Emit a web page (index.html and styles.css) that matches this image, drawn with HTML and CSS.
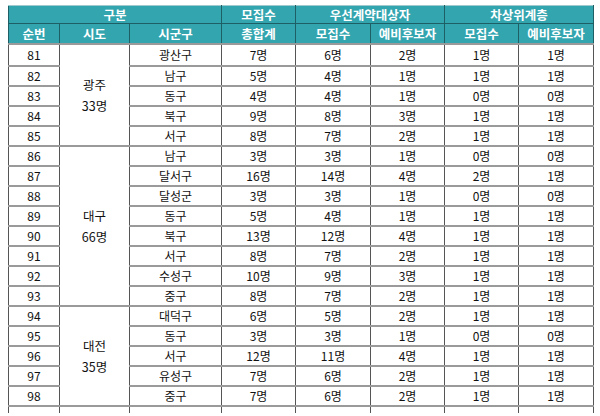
FILE: index.html
```html
<!DOCTYPE html>
<html lang="ko">
<head>
<meta charset="utf-8">
<link rel="stylesheet" href="styles.css">
</head>
<body>
<table class="grid">
<colgroup>
<col class="c1"><col class="c2"><col class="c3"><col class="c4"><col class="c5"><col class="c6"><col class="c7"><col class="c8">
</colgroup>
<thead>
<tr class="h1"><th colspan="3">구분</th><th>모집수</th><th colspan="2">우선계약대상자</th><th colspan="2">차상위계층</th></tr>
<tr class="h2"><th>순번</th><th>시도</th><th>시군구</th><th>총합계</th><th>모집수</th><th>예비후보자</th><th>모집수</th><th>예비후보자</th></tr>
</thead>
<tbody>
<tr class="first"><td>81</td><td rowspan="5" class="region">광주<br>33명</td><td>광산구</td><td>7명</td><td>6명</td><td>2명</td><td>1명</td><td>1명</td></tr>
<tr><td>82</td><td>남구</td><td>5명</td><td>4명</td><td>1명</td><td>1명</td><td>1명</td></tr>
<tr><td>83</td><td>동구</td><td>4명</td><td>4명</td><td>1명</td><td>0명</td><td>0명</td></tr>
<tr><td>84</td><td>북구</td><td>9명</td><td>8명</td><td>3명</td><td>1명</td><td>1명</td></tr>
<tr><td>85</td><td>서구</td><td>8명</td><td>7명</td><td>2명</td><td>1명</td><td>1명</td></tr>
<tr><td>86</td><td rowspan="8" class="region">대구<br>66명</td><td>남구</td><td>3명</td><td>3명</td><td>1명</td><td>0명</td><td>0명</td></tr>
<tr><td>87</td><td>달서구</td><td>16명</td><td>14명</td><td>4명</td><td>2명</td><td>1명</td></tr>
<tr><td>88</td><td>달성군</td><td>3명</td><td>3명</td><td>1명</td><td>0명</td><td>0명</td></tr>
<tr><td>89</td><td>동구</td><td>5명</td><td>4명</td><td>1명</td><td>1명</td><td>1명</td></tr>
<tr><td>90</td><td>북구</td><td>13명</td><td>12명</td><td>4명</td><td>1명</td><td>1명</td></tr>
<tr><td>91</td><td>서구</td><td>8명</td><td>7명</td><td>2명</td><td>1명</td><td>1명</td></tr>
<tr><td>92</td><td>수성구</td><td>10명</td><td>9명</td><td>3명</td><td>1명</td><td>1명</td></tr>
<tr><td>93</td><td>중구</td><td>8명</td><td>7명</td><td>2명</td><td>1명</td><td>1명</td></tr>
<tr><td>94</td><td rowspan="5" class="region">대전<br>35명</td><td>대덕구</td><td>6명</td><td>5명</td><td>2명</td><td>1명</td><td>1명</td></tr>
<tr><td>95</td><td>동구</td><td>3명</td><td>3명</td><td>1명</td><td>0명</td><td>0명</td></tr>
<tr><td>96</td><td>서구</td><td>12명</td><td>11명</td><td>4명</td><td>1명</td><td>1명</td></tr>
<tr><td>97</td><td>유성구</td><td>7명</td><td>6명</td><td>2명</td><td>1명</td><td>1명</td></tr>
<tr><td>98</td><td>중구</td><td>7명</td><td>6명</td><td>2명</td><td>1명</td><td>1명</td></tr>
<tr class="tail"><td></td><td></td><td></td><td></td><td></td><td></td><td></td><td></td></tr>
</tbody>
</table>
</body>
</html>
```

FILE: styles.css
```css
html, body {
  margin: 0;
  padding: 0;
  background: #ffffff;
}
body {
  padding: 5px 0 0 8px;
  font-family: "Noto Sans CJK KR", "Noto Sans", sans-serif;
  color: #111;
}
.grid {
  border-collapse: collapse;
  table-layout: fixed;
  width: 585px;
  font-size: 12px;
}
.c1 { width: 51px; }
.c2 { width: 70px; }
.c3 { width: 92px; }
.c4 { width: 74px; }
.c5 { width: 75px; }
.c6 { width: 74px; }
.c7 { width: 74px; }
.c8 { width: 75px; }
.grid th {
  background: #33a5af;
  color: #ffffff;
  font-weight: 700;
  font-size: 12.5px;
  padding: 0;
  line-height: 16px;
  border: 1px solid #1d5f64;
  text-align: center;
}
.grid .h1 th {
  height: 17px;
  border-top: 1px solid #9fc9cc;
}
.grid .h2 th {
  height: 19px;
}
.grid td {
  padding: 0;
  height: 18px;
  line-height: 16px;
  text-align: center;
  border-left: 1px solid #555;
  border-right: 1px solid #555;
  border-top: 2px solid #9a9a9a;
  border-bottom: 2px solid #9a9a9a;
  color: #111;
}
.grid .first td {
  height: 20px;
}
.grid td.region {
  line-height: 21px;
  font-size: 12.5px;
}
.grid .tail td {
  height: 6px;
  line-height: 0;
  border-top: 2px solid #9a9a9a;
  border-bottom: none;
}
```
